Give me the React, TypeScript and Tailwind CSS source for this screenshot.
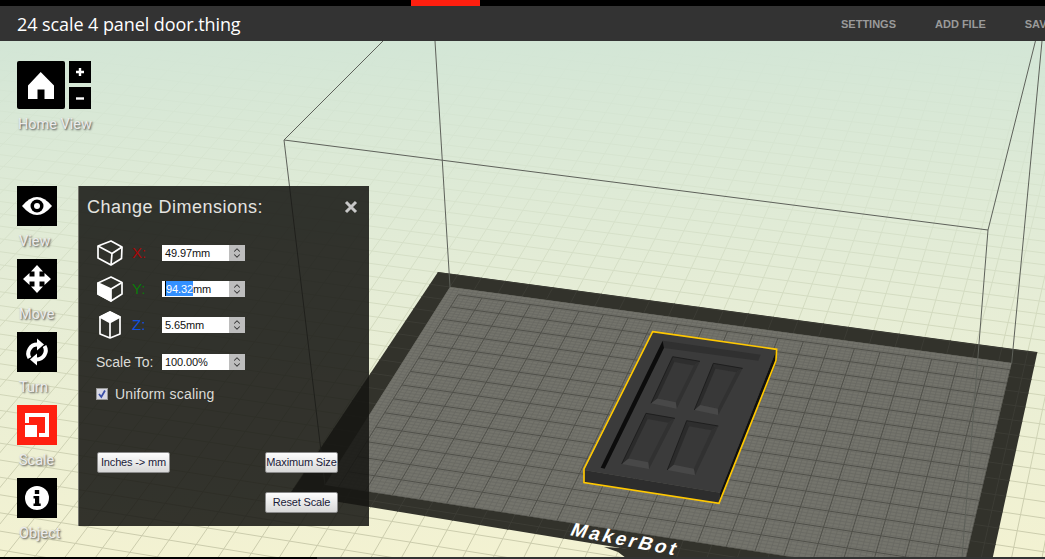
import { ReactNode } from "react";
import { ChevronDown, ChevronUp } from "lucide-react";

// plate corners on screen, the rest of the floor grid follows from them
const q = [[450, 287], [1011.7, 363], [960, 583], [325, 485]];
const bedW = 225;
const bedD = 145;

const dx1 = q[1][0] - q[2][0];
const dx2 = q[3][0] - q[2][0];
const sx = q[0][0] - q[1][0] + q[2][0] - q[3][0];
const dy1 = q[1][1] - q[2][1];
const dy2 = q[3][1] - q[2][1];
const sy = q[0][1] - q[1][1] + q[2][1] - q[3][1];
const det = dx1 * dy2 - dx2 * dy1;
const hg = (sx * dy2 - dx2 * sy) / det;
const hh = (dx1 * sy - sx * dy1) / det;
const ha = q[1][0] - q[0][0] + hg * q[1][0];
const hb = q[3][0] - q[0][0] + hh * q[3][0];
const hd = q[1][1] - q[0][1] + hg * q[1][1];
const he = q[3][1] - q[0][1] + hh * q[3][1];

function project(u: number, v: number) {
    const s = u / bedW;
    const t = v / bedD;
    const w = hg * s + hh * t + 1;
    return [(ha * s + hb * t + q[0][0]) / w, (hd * s + he * t + q[0][1]) / w];
}

function gridPath(u0: number, u1: number, v0: number, v1: number, step: number) {
    let d = "";
    const seg = (a: number[], b: number[]) => {
        d += `M${a[0].toFixed(1)} ${a[1].toFixed(1)}L${b[0].toFixed(1)} ${b[1].toFixed(1)}`;
    };
    for (let u = u0; u <= u1; u += step) seg(project(u, v0), project(u, v1));
    for (let v = v0; v <= v1; v += step) seg(project(u0, v), project(u1, v));
    return d;
}

const floorGrid = gridPath(-300, 500, -300, 300, 10);
const bedMinor = gridPath(0, bedW, 0, bedD, 2);
const bedMajor = gridPath(5, bedW, 5, bedD, 10);
const rimGrid = gridPath(-30, bedW + 30, -20, bedD + 30, 10);

const outerPlate = "438,272 1037.4,352 982,607 290,494";
const innerPlate = q.map((p) => p.join(",")).join(" ");

type Pt = number[];

function mix(a: Pt, b: Pt, k: number): Pt {
    return [a[0] + (b[0] - a[0]) * k, a[1] + (b[1] - a[1]) * k];
}

function pts(...list: Pt[]) {
    return list.map((p) => p.join(",")).join(" ");
}

function DoorPanel({ a, b, c, d }: { a: Pt; b: Pt; c: Pt; d: Pt }) {
    const ai = mix(mix(a, b, 0.14), mix(d, c, 0.14), 0.1);
    const bi = mix(mix(a, b, 0.86), mix(d, c, 0.86), 0.1);
    const ci = mix(mix(a, b, 0.86), mix(d, c, 0.86), 0.88);
    const di = mix(mix(a, b, 0.14), mix(d, c, 0.14), 0.88);
    return (
        <g>
            <polygon points={pts(ai, bi, ci, di)} fill="#383838" />
            <polygon points={pts(a, b, bi, ai)} fill="#2e2e2e" />
            <polygon points={pts(b, c, ci, bi)} fill="#313131" />
            <polygon points={pts(c, d, di, ci)} fill="#484848" />
            <polygon points={pts(d, a, ai, di)} fill="#2b2b2b" />
            <polyline points={pts(d, a, b)} fill="none" stroke="#131313" strokeWidth="2" />
        </g>
    );
}

function Scene() {
    return (
        <svg className="absolute inset-0 w-full h-full" viewBox="0 41 1045 516">
            <defs>
                <linearGradient id="floorLine" gradientUnits="userSpaceOnUse" x1="0" y1="41" x2="0" y2="557">
                    <stop offset="0" stopColor="#d3e6d6" />
                    <stop offset="0.3" stopColor="#d7e3cd" />
                    <stop offset="0.6" stopColor="#d2d8bb" />
                    <stop offset="1" stopColor="#cbcbab" />
                </linearGradient>
                <clipPath id="rimClip">
                    <polygon points={outerPlate} />
                </clipPath>
                <clipPath id="bedClip">
                    <polygon points={innerPlate} />
                </clipPath>
            </defs>
            <path d={floorGrid} stroke="url(#floorLine)" strokeWidth="1" fill="none" />
            <polygon points={outerPlate} fill="#32322b" />
            <polygon points="604,547 618,552 626,558 690,558 690,552" fill="#32322b" />
            <g clipPath="url(#rimClip)">
                <path d={rimGrid} stroke="#3c3c35" strokeWidth="1" fill="none" />
            </g>
            <polygon points={innerPlate} fill="#74746c" />
            <g clipPath="url(#bedClip)">
                <path d={bedMinor} stroke="#6a6a63" strokeWidth="0.8" fill="none" />
                <path d={bedMajor} stroke="#50504a" strokeWidth="1" fill="none" />
            </g>

            <text
                transform="translate(569 535) rotate(11) skewX(-14)"
                fontFamily="'Liberation Sans', sans-serif"
                fontWeight="700"
                fontSize="19"
                letterSpacing="2.8"
                fill="#ffffff"
            >
                MakerBot
            </text>

            {/* build volume wireframe */}
            <g fill="none" stroke="#5e615a" strokeWidth="1">
                <path d="M284 140L988 230" />
                <path d="M284 140L433 -9" />
                <path d="M988 230L1047 -5" />
                <path d="M284 140L325 485" />
                <path d="M988 230L960 583" />
                <path d="M435 41L450 287" />
                <path d="M1042 41L1011.7 363" />
            </g>

            {/* coordinates below are taken from a 3x crop */}
            <g transform="translate(570 320) scale(0.3333)">
                <polygon points="248,35 620,88 450,518 42,450" fill="#3b3b3b" />
                <polygon points="42,450 450,518 447,550 42,488" fill="#2d2d2d" />
                <polygon points="620,88 620,122 447,550 450,518" fill="#0f0f0f" />
                <polygon points="278,62 572,104 565,122 282,84" fill="#303030" />
                <polygon points="278,62 282,84 104,446 92,443" fill="#0c0c0c" />
                <DoorPanel a={[308, 110]} b={[390, 124]} c={[320, 266]} d={[243, 250]} />
                <DoorPanel a={[430, 130]} b={[518, 145]} c={[445, 285]} d={[373, 270]} />
                <DoorPanel a={[228, 280]} b={[315, 295]} c={[237, 447]} d={[155, 432]} />
                <DoorPanel a={[350, 302]} b={[445, 318]} c={[375, 466]} d={[292, 450]} />
                <polygon
                    points="248,35 620,88 618,122 447,550 42,488 42,447"
                    fill="none"
                    stroke="#ffc800"
                    strokeWidth="5"
                />
            </g>
        </svg>
    );
}

function ToolButton({ label, active, children }: { label: string; active?: boolean; children: ReactNode }) {
    return (
        <div className="flex flex-col h-[73px]">
            <div className={`w-10 h-10 ${active ? "bg-[#ff2010]" : "bg-black"}`}>
                <svg viewBox="0 0 40 40" className="w-10 h-10">
                    {children}
                </svg>
            </div>
            <div className="mt-2 pl-[2px] leading-4 text-[14.5px] text-[#ececec] font-['Roboto',sans-serif] [text-shadow:1px_1px_2px_#444]">
                {label}
            </div>
        </div>
    );
}

function Sidebar() {
    return (
        <div className="relative flex flex-col w-fit pl-[17px] pt-5">
            <div className="flex gap-1">
                <div className="w-12 h-12 bg-black rounded-[2px]">
                    <svg viewBox="0 0 48 48" className="w-12 h-12">
                        <path d="M23.7 11L37 24.5V38H27.5V28.5H20.5V38H11V24.5Z" fill="#fff" />
                    </svg>
                </div>
                <div className="flex flex-col justify-between">
                    <div className="w-[22px] h-[22px] bg-black flex items-center justify-center">
                        <svg viewBox="0 0 22 22" className="w-[22px] h-[22px]">
                            <path d="M7 11H15M11 7V15" stroke="#fff" strokeWidth="2.4" />
                        </svg>
                    </div>
                    <div className="w-[22px] h-[22px] bg-black flex items-center justify-center">
                        <svg viewBox="0 0 22 22" className="w-[22px] h-[22px]">
                            <path d="M7 11.5H15" stroke="#fff" strokeWidth="2.4" />
                        </svg>
                    </div>
                </div>
            </div>
            <div className="mt-2 pl-[1px] leading-4 text-[14.5px] text-[#ececec] font-['Roboto',sans-serif] [text-shadow:1px_1px_2px_#444]">
                Home View
            </div>
            <div className="mt-[53px]">
                <ToolButton label="View">
                    <path d="M5 20Q20 2 35 20Q20 38 5 20Z" fill="#fff" />
                    <circle cx="20" cy="20" r="6.5" fill="#000" />
                    <circle cx="20" cy="20" r="3" fill="#fff" />
                </ToolButton>
                <ToolButton label="Move">
                    <path
                        d="M20 6L26 12.5H22.5V17.5H27.5V14L34 20L27.5 26V22.5H22.5V27.5H26L20 34L14 27.5H17.5V22.5H12.5V26L6 20L12.5 14V17.5H17.5V12.5H14Z"
                        fill="#fff"
                    />
                </ToolButton>
                <ToolButton label="Turn">
                    <g fill="none" stroke="#fff" strokeWidth="4">
                        <path d="M12.5 26A9 9 0 0 1 20.5 12.5" />
                        <path d="M27.5 14A9 9 0 0 1 19.5 27.5" />
                    </g>
                    <path d="M20 6.5L27 12.5L20 18.5Z" fill="#fff" />
                    <path d="M20 33.5L13 27.5L20 21.5Z" fill="#fff" />
                </ToolButton>
                <ToolButton label="Scale" active>
                    <path d="M8 8H32V32H22V28H28V12H12V18H8Z" fill="#fff" />
                    <rect x="8" y="20" width="12" height="12" fill="#fff" />
                </ToolButton>
                <ToolButton label="Object">
                    <circle cx="20" cy="20" r="12" fill="#fff" />
                    <rect x="17.8" y="12" width="4.4" height="4" fill="#000" />
                    <path d="M16.5 18H22.2V25.5H23.7V28H16.5V25.5H18V20.5H16.5Z" fill="#000" />
                </ToolButton>
            </div>
        </div>
    );
}

function NumberField({ value, selected }: { value: string; selected?: string }) {
    return (
        <div className="flex w-[83px] h-4 bg-white">
            <div className="flex-1 pl-[3px] text-[11px] leading-4 text-[#111] tracking-[-0.1px] font-['Liberation_Sans',sans-serif]">
                {selected && <span className="bg-[#3390ff] text-white inline-block h-[15px] border-l border-black">{selected}</span>}
                {value}
            </div>
            <div className="w-4 bg-[#bdbdbd] flex flex-col items-center justify-center text-[#333]">
                <ChevronUp size={12} strokeWidth={2.5} className="-mb-[2px]" />
                <ChevronDown size={12} strokeWidth={2.5} className="-mt-[2px]" />
            </div>
        </div>
    );
}

function PanelButton({ children }: { children: ReactNode }) {
    return (
        <button className="w-[73px] h-[21px] rounded-[2px] border border-[#8a8a8a] bg-linear-to-b from-[#fdfdfd] to-[#d8d8d8] text-[11px] tracking-[-0.15px] text-[#1a1a38] font-['Liberation_Sans',sans-serif] whitespace-nowrap">
            {children}
        </button>
    );
}

function CubeX() {
    return (
        <svg viewBox="0 0 26 26" className="w-[26px] h-[26px]" fill="none" stroke="#fff" strokeWidth="1.7" strokeLinejoin="round">
            <path d="M1 6L14 1L25 7L24.5 18.5L14 25L1 18Z" />
            <path d="M1 6L15 13.5L25 7M15 13.5L14 25" />
        </svg>
    );
}

function CubeY() {
    return (
        <svg viewBox="0 0 26 26" className="w-[26px] h-[26px]" fill="none" stroke="#fff" strokeWidth="1.7" strokeLinejoin="round">
            <path d="M1 7L14 1L25 6.5V18L14 25L1 18Z" />
            <path d="M1 7L14 13L14 25L1 18Z" fill="#fff" />
            <path d="M14 13L25 6.5" />
        </svg>
    );
}

function CubeZ() {
    return (
        <svg viewBox="0 0 26 28" className="w-[26px] h-7" fill="none" stroke="#fff" strokeWidth="1.7" strokeLinejoin="round">
            <path d="M3 6L13 1L23 6V23L13 27L3 23Z" />
            <path d="M3 6L13 11.5L23 6L13 1Z" fill="#fff" />
            <path d="M13 11.5V27" />
        </svg>
    );
}

function DimensionRow({ icon, axis, color, children }: { icon: ReactNode; axis: string; color: string; children: ReactNode }) {
    return (
        <div className="flex items-center h-4">
            <div className="w-[35px] flex">{icon}</div>
            <div className={`w-[30px] text-[15px] ${color} font-['Liberation_Sans',sans-serif]`}>{axis}</div>
            {children}
        </div>
    );
}

function DimensionsPanel() {
    return (
        <div className="absolute left-[78px] top-[145px] w-[291px] h-[340px] bg-[#161612]/[0.87] border-l border-l-[#77776f] flex flex-col pl-[18px] pr-[31px] font-['Liberation_Sans',sans-serif]">
            <div className="flex items-center justify-between -ml-[10px] -mr-[20px] pt-[1px] h-[40px]">
                <span className="text-lg tracking-[0.5px] text-[#e4e4e0]">Change Dimensions:</span>
                <svg viewBox="0 0 14 14" className="w-[14px] h-[14px]">
                    <path d="M2 2L12 12M12 2L2 12" stroke="#c8c8c8" strokeWidth="3" />
                </svg>
            </div>
            <div className="flex flex-col gap-5 mt-[19px]">
                <DimensionRow icon={<CubeX />} axis="X:" color="text-[#a80808]">
                    <NumberField value="49.97mm" />
                </DimensionRow>
                <DimensionRow icon={<CubeY />} axis="Y:" color="text-[#0a7a0a]">
                    <NumberField selected="94.32" value="mm" />
                </DimensionRow>
                <DimensionRow icon={<CubeZ />} axis="Z:" color="text-[#1050e0]">
                    <NumberField value="5.65mm" />
                </DimensionRow>
            </div>
            <div className="flex items-center h-4 mt-[21px] -ml-[1px]">
                <span className="w-[66px] text-sm text-[#dcdcd8] whitespace-nowrap">Scale To:</span>
                <NumberField value="100.00%" />
            </div>
            <div className="flex items-center gap-[7px] mt-[14px] -ml-[1px]">
                <div className="w-3 h-3 bg-[#d8d8e4] border border-[#999] flex items-center justify-center">
                    <svg viewBox="0 0 10 10" className="w-[10px] h-[10px]">
                        <path d="M2 5L4.3 8L8 1.5" fill="none" stroke="#3a4fa8" strokeWidth="1.8" />
                    </svg>
                </div>
                <span className="text-sm tracking-[0.2px] text-[#dcdcd8]">Uniform scaling</span>
            </div>
            <div className="flex justify-between mt-[48px]">
                <PanelButton>Inches -&gt; mm</PanelButton>
                <PanelButton>Maximum Size</PanelButton>
            </div>
            <div className="flex justify-end mt-[19px]">
                <PanelButton>Reset Scale</PanelButton>
            </div>
        </div>
    );
}

export default function App() {
    return (
        <div className="w-[1045px] h-[559px] flex flex-col overflow-hidden">
            <div className="h-[6px] bg-black pl-[411px] shrink-0">
                <div className="w-[69px] h-full bg-[#ff1f0f]" />
            </div>
            <div className="h-[35px] bg-[#333333] flex items-center justify-between pl-[17px] shrink-0">
                <span className="text-lg tracking-[-0.08px] text-white font-['Open_Sans',sans-serif]">24 scale 4 panel door.thing</span>
                <nav className="flex gap-[39px] w-[204px] mt-[1px] shrink-0 text-[11px] font-bold text-[#9a9a9a] font-['Liberation_Sans',sans-serif] whitespace-nowrap overflow-hidden">
                    <span>SETTINGS</span>
                    <span>ADD FILE</span>
                    <span>SAVE</span>
                </nav>
            </div>
            <div className="relative flex-1 bg-linear-to-b from-[#d3e6d6] via-[#e6edd6] to-[#f3f2d2] overflow-hidden">
                <Scene />
                <Sidebar />
                <DimensionsPanel />
            </div>
            <div className="h-[2px] flex shrink-0 bg-[#333333]">
                <div className="w-[317px] bg-black" />
            </div>
        </div>
    );
}
